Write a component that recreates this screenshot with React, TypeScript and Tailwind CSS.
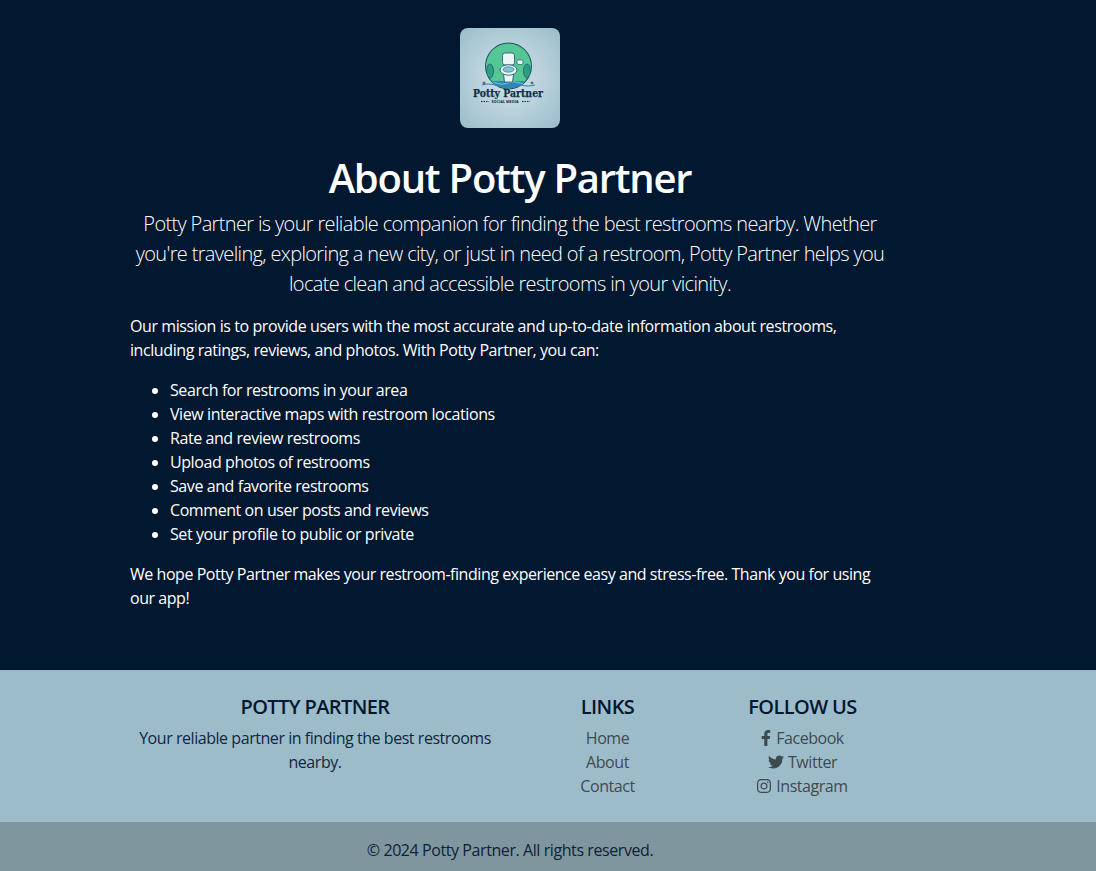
import React from "react";
import { FaFacebookF, FaTwitter, FaInstagram } from "react-icons/fa";

const features = [
  "Search for restrooms in your area",
  "View interactive maps with restroom locations",
  "Rate and review restrooms",
  "Upload photos of restrooms",
  "Save and favorite restrooms",
  "Comment on user posts and reviews",
  "Set your profile to public or private",
];

const Logo = () => (
  <svg viewBox="0 0 100 100" className="w-[100px] h-[100px] rounded-lg block">
    <defs>
      <radialGradient id="logoBg" cx="50%" cy="50%" r="65%">
        <stop offset="0%" stopColor="#d3e3e9" />
        <stop offset="60%" stopColor="#b4ced9" />
        <stop offset="100%" stopColor="#9ebfcd" />
      </radialGradient>
      <clipPath id="logoCircle">
        <circle cx="48.5" cy="38" r="22.5" />
      </clipPath>
    </defs>
    <rect width="100" height="100" fill="url(#logoBg)" />
    <circle cx="48.5" cy="38" r="23.5" fill="#17566b" />
    <g clipPath="url(#logoCircle)">
      <rect x="24" y="14" width="50" height="50" fill="#55c796" />
      <ellipse cx="30" cy="43" rx="3.5" ry="7" fill="#2f9e80" stroke="#17566b" strokeWidth="0.7" />
      <ellipse cx="67" cy="43" rx="3.5" ry="7" fill="#2f9e80" stroke="#17566b" strokeWidth="0.7" />
      <rect x="24" y="53" width="50" height="10" fill="#2f86b8" />
      <path d="M24 55q6-2.500 12 0t12 0t12 0t12 0" fill="none" stroke="#8fd0e6" strokeWidth="0.8" />
    </g>
    <path d="M22 57q6-2 13 0t13 0t13 0t14 0" fill="none" stroke="#2f86b8" strokeWidth="1.200" />
    <rect x="42.500" y="25" width="12" height="12" rx="2.500" fill="#eef5f5" stroke="#17566b" strokeWidth="0.8" />
    <path d="M43.500 46h10l-1 8h-8z" fill="#eef5f5" stroke="#17566b" strokeWidth="0.8" />
    <ellipse cx="48.5" cy="42" rx="8.500" ry="5.200" fill="#eef5f5" stroke="#17566b" strokeWidth="0.8" />
    <ellipse cx="48.5" cy="41.500" rx="5.500" ry="2.700" fill="#7fc4d4" stroke="#17566b" strokeWidth="0.5" />
    <rect x="57" y="32" width="6" height="4.500" rx="1.500" fill="#eef5f5" stroke="#17566b" strokeWidth="0.7" />
    <path d="M22.500 55h3M24 53.500v3M70.500 55h3M72 53.500v3" stroke="#17384f" strokeWidth="0.8" />
    <text x="48" y="68.500" textAnchor="middle" textLength="70" lengthAdjust="spacingAndGlyphs" fontSize="11.500" fontWeight="700" fill="#123047" stroke="#123047" strokeWidth="0.25" fontFamily="'DejaVu Serif', serif">
      Potty Partner
    </text>
    <text x="45" y="75" textAnchor="middle" textLength="27" lengthAdjust="spacingAndGlyphs" fontSize="3.500" fontWeight="700" fill="#123047" fontFamily="'Noto Sans', sans-serif">
      SOCIAL MEDIA
    </text>
    <path d="M21 73.500h8M62 73.500h8" stroke="#123047" strokeWidth="1" strokeDasharray="1.500 1" />
  </svg>
);

export default function App() {
  return (
    <div className="min-h-[871px] bg-[#021730] font-['Open_Sans',sans-serif] text-base leading-6">
      <main className="w-[780px] ml-[120px] px-[10px] pt-[28px] pb-[44px] text-white">
        <div className="flex justify-center mb-[26px]">
          <Logo />
        </div>
        <h1 className="text-[40px] leading-[48px] font-semibold text-center mb-[7px] tracking-[-1.25px]">About Potty Partner</h1>
        <p className="text-xl leading-[30px] font-light text-center mb-[15px] tracking-[-0.65px]">
          Potty Partner is your reliable companion for finding the best restrooms nearby. Whether you're traveling,
          exploring a new city, or just in need of a restroom, Potty Partner helps you locate clean and accessible
          restrooms in your vicinity.
        </p>
        <p className="mb-4 tracking-[-0.42px]">
          Our mission is to provide users with the most accurate and up-to-date information about restrooms, including
          ratings, reviews, and photos. With Potty Partner, you can:
        </p>
        <ul className="list-disc pl-10 mb-4 tracking-[-0.42px]">
          {features.map((f) => (
            <li key={f}>{f}</li>
          ))}
        </ul>
        <p className="mb-4 tracking-[-0.45px]">
          We hope Potty Partner makes your restroom-finding experience easy and stress-free. Thank you for using our
          app!
        </p>
      </main>

      <footer className="bg-[#9dbcc9] text-[#021730] tracking-[-0.45px]">
        <div className="w-[780px] ml-[120px] grid grid-cols-[390px_195px_195px] pt-[25px] pb-[24px] text-center">
          <div className="px-[10px]">
            <h5 className="text-xl leading-6 font-semibold mb-[7px] tracking-[-0.6px]">POTTY PARTNER</h5>
            <p className="text-[#10273f]">Your reliable partner in finding the best restrooms nearby.</p>
          </div>
          <div className="px-[10px]">
            <h5 className="text-xl leading-6 font-semibold mb-[7px] tracking-[-0.6px]">LINKS</h5>
            <ul className="text-[#3d4a52]">
              <li>Home</li>
              <li>About</li>
              <li>Contact</li>
            </ul>
          </div>
          <div className="px-[10px]">
            <h5 className="text-xl leading-6 font-semibold mb-[7px] tracking-[-0.6px]">FOLLOW US</h5>
            <ul className="text-[#3d4a52]">
              <li className="flex items-center justify-center gap-[5px]"><FaFacebookF className="w-[10px] h-[16px]" />Facebook</li>
              <li className="flex items-center justify-center gap-[4px]"><FaTwitter className="w-[16px] h-[16px]" />Twitter</li>
              <li className="flex items-center justify-center gap-[5px]"><FaInstagram className="w-[14px] h-[16px]" />Instagram</li>
            </ul>
          </div>
        </div>
        <div className="bg-[#80969f] h-[49px] pt-[16px]">
          <p className="w-[780px] ml-[120px] text-center text-[#0d2238] tracking-[-0.42px]">© 2024 Potty Partner. All rights reserved.</p>
        </div>
      </footer>
    </div>
  );
}
